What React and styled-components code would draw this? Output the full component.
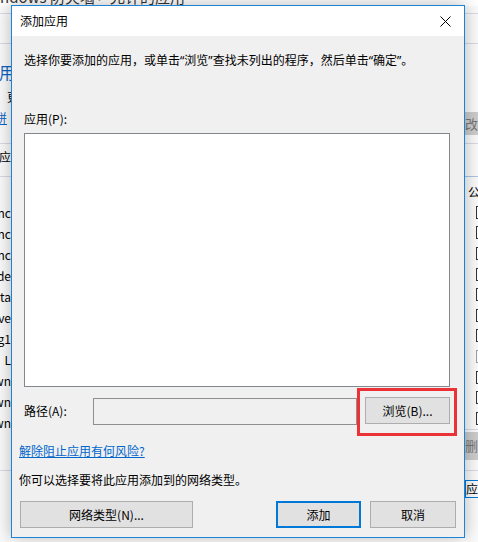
import styled, { createGlobalStyle } from "styled-components";

const GlobalStyle = createGlobalStyle`
  html, body {
    margin: 0;
    padding: 0;
    background: #ffffff;
  }
  body {
    font-family: "Noto Sans CJK SC", "Noto Sans", sans-serif;
    font-size: 12px;
    color: #000;
  }
`;

const leftItems = ["nc", "nc", "nc", "de", "ta", "ive", "g1", "L", "wn", "wn", "wn"];

export default function App() {
  return (
    <>
      <GlobalStyle />
      <Desktop>
        <Crumb>
          <span>ndows 防火墙 &gt; 允许的应用</span>
        </Crumb>
        <Strips>
          <LeftStrip>
            <Gap $h={7} />
            <Rule />
            <Gap $h={29} />
            <Rule />
            <Gap $h={18} />
            <BigBlue>用</BigBlue>
            <Gap $h={7} />
            <StripText $shift={7}>更</StripText>
            <Gap $h={5} />
            <StripLink $shift={-5}>拼</StripLink>
            <Gap $h={17} />
            <Rule />
            <Gap $h={5} />
            <StripText $shift={-1}>应用</StripText>
            <Gap $h={11} />
            <Rule />
            <Gap $h={25} />
            {leftItems.map((t, i) => (
              <ListRow key={i}>{t}</ListRow>
            ))}
            <Gap $h={37} />
            <Rule />
          </LeftStrip>
          <Filler />
          <RightStrip>
            <Gap $h={7} />
            <Rule />
            <Gap $h={29} />
            <Rule />
            <Gap $h={68} />
            <GrayChip $h={23}>改</GrayChip>
            <Gap $h={8} />
            <Rule />
            <Gap $h={32} />
            <Rule $blue />
            <Gap $h={7} />
            <StripText $shift={3}>公</StripText>
            <Gap $h={2} />
            {leftItems.map((_, i) => (
              <CheckRow key={i}>
                <Box $dim={i === 7} />
              </CheckRow>
            ))}
            <Rule />
            <Gap $h={2} />
            <GrayChip $h={28}>删除</GrayChip>
            <Gap $h={10} />
            <Rule />
            <Gap $h={9} />
            <BlueChip>应用</BlueChip>
          </RightStrip>
        </Strips>

        <Dialog>
          <TitleBar>
            <Title>添加应用</Title>
            <CloseButton aria-label="关闭">
              <svg width="11" height="11" viewBox="0 0 11 11">
                <path d="M0.5 0.5 L10.5 10.5 M10.5 0.5 L0.5 10.5" stroke="#000" strokeWidth="1" />
              </svg>
            </CloseButton>
          </TitleBar>
          <Body>
            <Section $left={12} $right={14}>
              <Line>
                选择你要添加的应用，或单击<Q>“</Q>浏览<Q>”</Q>查找未列出的程序，然后单击<Q>“</Q>确定<Q>”</Q>。
              </Line>
              <Line $top={42}>应用(P):</Line>
              <ListBox />
              <PathRow>
                <PathLabel>路径(A):</PathLabel>
                <PathInput />
                <Highlight>
                  <Button $w={85}>浏览(B)...</Button>
                </Highlight>
              </PathRow>
            </Section>
            <Section $left={7} $right={8}>
              <RiskLink href="#">解除阻止应用有何风险?</RiskLink>
              <Line $top={13}>你可以选择要将此应用添加到的网络类型。</Line>
              <ButtonRow>
                <Button $w={173} $ml={1}>网络类型(N)...</Button>
                <Push />
                <Button $w={85} $primary>添加</Button>
                <Button $w={86}>取消</Button>
              </ButtonRow>
            </Section>
          </Body>
        </Dialog>
      </Desktop>
    </>
  );
}

const Desktop = styled.div`
  position: relative;
  width: 478px;
  height: 542px;
  overflow: hidden;
  background: #ffffff;
  display: flex;
  flex-direction: column;
`;

const Crumb = styled.div`
  height: 6px;
  overflow: hidden;
  flex-shrink: 0;
  span {
    display: block;
    margin-top: -12px;
    font-size: 15px;
    line-height: 18px;
    color: #333;
    white-space: nowrap;
  }
`;

const Strips = styled.div`
  flex: 1;
  display: flex;
`;

const LeftStrip = styled.div`
  width: 11px;
  overflow: hidden;
  display: flex;
  flex-direction: column;
  background: #fafafa;
`;

const RightStrip = styled.div`
  width: 13px;
  overflow: hidden;
  display: flex;
  flex-direction: column;
  background: #fafafa;
`;

const Filler = styled.div`
  flex: 1;
`;

const Gap = styled.div`
  height: ${(p) => p.$h}px;
  flex-shrink: 0;
`;

const Rule = styled.div`
  height: 1px;
  flex-shrink: 0;
  background: ${(p) => (p.$blue ? "#a9c6e6" : "#d9d9e6")};
`;

const BigBlue = styled.div`
  height: 20px;
  line-height: 20px;
  font-size: 16px;
  color: #0b63c4;
  white-space: nowrap;
  margin-left: -1px;
`;

const StripText = styled.div`
  height: 16px;
  line-height: 16px;
  white-space: nowrap;
  margin-left: ${(p) => p.$shift}px;
`;

const StripLink = styled(StripText)`
  color: #0b63c4;
  text-decoration: underline;
`;

const ListRow = styled.div`
  height: 21px;
  line-height: 21px;
  display: flex;
  justify-content: flex-end;
  white-space: nowrap;
  flex-shrink: 0;
`;

const CheckRow = styled.div`
  height: 20.6px;
  display: flex;
  align-items: center;
  padding-left: 11px;
  flex-shrink: 0;
`;

const Box = styled.div`
  width: 11px;
  height: 11px;
  flex-shrink: 0;
  border: 1px solid ${(p) => (p.$dim ? "#a0a0a0" : "#333")};
  background: #fff;
`;

const GrayChip = styled.div`
  height: ${(p) => p.$h}px;
  line-height: ${(p) => p.$h}px;
  background: #cccccc;
  color: #777;
  white-space: nowrap;
  flex-shrink: 0;
  font-size: 13px;
`;

const BlueChip = styled.div`
  height: 18px;
  line-height: 16px;
  border: 1px solid #0078d7;
  border-right: none;
  box-sizing: border-box;
  white-space: nowrap;
  flex-shrink: 0;
`;

const Dialog = styled.div`
  position: absolute;
  left: 11px;
  top: 5px;
  width: 454px;
  height: 533px;
  box-sizing: border-box;
  border: 1px solid #1c84d8;
  background: #f0f0f0;
  box-shadow: 0 0 16px rgba(0, 0, 0, 0.28);
  display: flex;
  flex-direction: column;
`;

const TitleBar = styled.div`
  height: 30px;
  flex-shrink: 0;
  background: #ffffff;
  display: flex;
  align-items: center;
  padding: 0 10px 0 8px;
`;

const Title = styled.div`
  flex: 1;
  line-height: 16px;
  font-size: 12px;
`;

const CloseButton = styled.button`
  border: none;
  background: transparent;
  padding: 0;
  width: 11px;
  height: 11px;
  display: flex;
  margin-right: 3px;
`;

const Body = styled.div`
  flex: 1;
  display: flex;
  flex-direction: column;
  padding-top: 16px;
`;

const Section = styled.div`
  display: flex;
  flex-direction: column;
  padding: 0 ${(p) => p.$right}px 0 ${(p) => p.$left}px;
`;

const Line = styled.div`
  line-height: 16px;
  white-space: nowrap;
  margin-top: ${(p) => p.$top || 0}px;
`;

const Q = styled.span`
  font-family: "Noto Sans", sans-serif;
`;

const ListBox = styled.div`
  margin-top: 6px;
  height: 254px;
  box-sizing: border-box;
  background: #ffffff;
  border: 1px solid #828790;
`;

const PathRow = styled.div`
  margin-top: 10px;
  height: 27px;
  display: flex;
  align-items: center;
`;

const PathLabel = styled.div`
  width: 69px;
  line-height: 16px;
  flex-shrink: 0;
`;

const PathInput = styled.div`
  width: 264px;
  height: 27px;
  margin-top: 2px;
  box-sizing: border-box;
  border: 1px solid #8f8f8f;
  background: #f0f0f0;
`;

const Highlight = styled.div`
  position: relative;
  margin-left: auto;
  display: flex;
  &::after {
    content: "";
    position: absolute;
    left: -8px;
    right: -7px;
    top: -9px;
    bottom: -12px;
    border: 3px solid #eb3237;
    pointer-events: none;
  }
`;

const Button = styled.button`
  width: ${(p) => p.$w}px;
  height: 27px;
  margin-left: ${(p) => p.$ml || 0}px;
  box-sizing: border-box;
  padding: 0;
  background: #e1e1e1;
  border: ${(p) => (p.$primary ? "2px solid #0078d7" : "1px solid #adadad")};
  font-family: "Noto Sans CJK SC", "Noto Sans", sans-serif;
  font-size: 12px;
  line-height: 16px;
  color: #000;
`;

const RiskLink = styled.a`
  margin-top: 19px;
  line-height: 16px;
  color: #0066cc;
  text-decoration: underline;
  align-self: flex-start;
`;

const ButtonRow = styled.div`
  margin-top: 13px;
  display: flex;
  gap: 9px;
`;

const Push = styled.div`
  flex: 1;
`;
